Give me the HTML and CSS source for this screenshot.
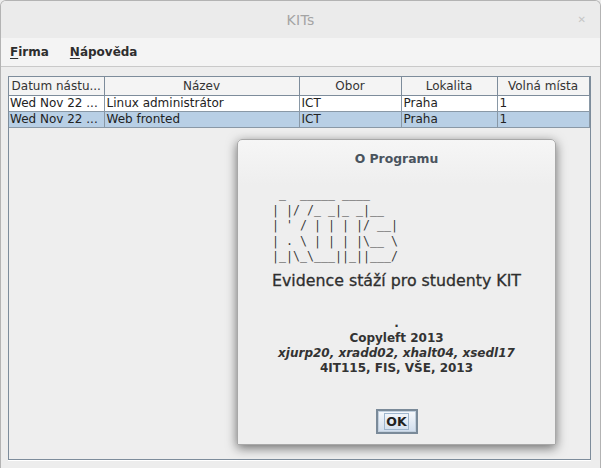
FILE: index.html
```html
<!DOCTYPE html>
<html>
<head>
<meta charset="utf-8">
<title>KITs</title>
<link rel="stylesheet" href="styles.css">
</head>
<body>
<div class="window">
  <div class="titlebar">
    <span class="title">KITs</span>
    <span class="close">✕</span>
  </div>
  <div class="menubar">
    <span class="menu"><u>F</u>irma</span>
    <span class="menu"><u>N</u>ápověda</span>
  </div>
  <div class="content">
    <div class="scroll">
      <table class="grid">
        <colgroup>
          <col class="c1"><col class="c2"><col class="c3"><col class="c4"><col class="c5">
        </colgroup>
        <thead>
          <tr><th>Datum nástu...</th><th>Název</th><th>Obor</th><th>Lokalita</th><th>Volná místa</th></tr>
        </thead>
        <tbody>
          <tr><td>Wed Nov 22 ...</td><td>Linux administrátor</td><td>ICT</td><td>Praha</td><td>1</td></tr>
          <tr class="selected"><td>Wed Nov 22 ...</td><td>Web fronted</td><td>ICT</td><td>Praha</td><td>1</td></tr>
        </tbody>
      </table>
    </div>
  </div>
  <div class="dialog">
    <div class="dialog-title">O Programu</div>
    <div class="about">
<pre class="art"> _  _____ ____
| |/ /_ _|_ _|__
| ' / | | | |/ __|
| . \ | | | |\__ \
|_|\_\___||_||___/</pre>
      <div class="headline">Evidence stáží pro studenty KIT</div>
    </div>
    <div class="info">
      <div>.</div>
      <div>Copyleft 2013</div>
      <div class="authors">xjurp20, xradd02, xhalt04, xsedl17</div>
      <div>4IT115, FIS, VŠE, 2013</div>
    </div>
    <div class="ok-button"><span class="focus">OK</span></div>
  </div>
</div>
</body>
</html>
```
FILE: styles.css
```css
html, body {
  margin: 0;
  padding: 0;
  background: #ededed;
}
body {
  width: 601px;
  height: 468px;
  overflow: hidden;
  font-family: "DejaVu Sans", "Liberation Sans", sans-serif;
}
.window {
  position: relative;
  width: 601px;
  height: 468px;
  box-sizing: border-box;
  border: 1px solid #b3b3b3;
  border-bottom: none;
  border-radius: 6px 6px 0 0;
  background: #ededed;
  display: flex;
  flex-direction: column;
  overflow: hidden;
}
.titlebar {
  height: 37px;
  flex: none;
  background: #ebebeb;
  display: grid;
  grid-template-columns: 1fr auto 1fr;
  align-items: center;
}
.title {
  grid-column: 2;
  font-size: 14px;
  color: #a4a4a4;
  letter-spacing: 0.3px;
}
.close {
  grid-column: 3;
  justify-self: end;
  margin-right: 14px;
  font-size: 10px;
  font-weight: bold;
  color: #c6c6c6;
}
.menubar {
  height: 28px;
  flex: none;
  background: #f4f4f4;
  border-bottom: 1px solid #c9c9c9;
  display: flex;
  align-items: center;
  padding-left: 9px;
  gap: 21px;
}
.menu {
  font-size: 12px;
  font-weight: bold;
  color: #2e2e2e;
}
.menu u {
  text-underline-offset: 2px;
}
.content {
  flex: 1;
  padding: 9px 9px 8px 7px;
  display: flex;
}
.scroll {
  flex: 1;
  border: 1px solid #7d8c9b;
  background: #eeeeee;
  box-shadow: 0 1px 0 #ffffff;
}
.grid {
  border-collapse: collapse;
  table-layout: fixed;
  width: 580px;
  font-size: 12px;
  color: #222222;
}
.c1 { width: 95px; }
.c2 { width: 195px; }
.c3 { width: 102px; }
.c4 { width: 96px; }
.c5 { width: 92px; }
.grid th {
  height: 18px;
  padding: 0 1px;
  font-weight: normal;
  color: #333333;
  background: #f4f4f4;
  border: 1px solid #7d8c9b;
  border-top: none;
  white-space: nowrap;
  overflow: hidden;
  text-align: center;
  line-height: 18px;
}
.grid th:first-child { border-left: none; }
.grid td {
  height: 15px;
  padding: 0 2px 0 2px;
  border: 1px solid #8998a6;
  background: #ffffff;
  white-space: nowrap;
  overflow: hidden;
  line-height: 15px;
}
.grid td:first-child { border-left: none; padding-left: 1px; }
.grid tr.selected td { background: #b8cfe5; }

.dialog {
  position: absolute;
  left: 236px;
  top: 138px;
  width: 319px;
  height: 306px;
  box-sizing: border-box;
  border: 1px solid #a8a8a8;
  border-radius: 5px 5px 0 0;
  background: linear-gradient(#f6f6f6, #eeeeee 45px);
  box-shadow: 0 3px 11px rgba(0, 0, 0, 0.55);
  display: flex;
  flex-direction: column;
  align-items: center;
  color: #333333;
}
.dialog-title {
  margin-top: 11px;
  font-size: 12.4px;
  font-weight: bold;
  line-height: 15px;
  color: #4a545e;
}
.about {
  margin-top: 21px;
  display: flex;
  flex-direction: column;
}
.art {
  margin: 0;
  font-family: "DejaVu Sans Mono", "Liberation Mono", monospace;
  font-size: 11.63px;
  line-height: 15.5px;
  color: #3a3a3a;
}
.headline {
  margin-top: 6px;
  font-size: 15.8px;
  line-height: 20px;
  color: #2e2e2e;
  -webkit-text-stroke: 0.3px #2e2e2e;
}
.info {
  margin-top: 25px;
  font-size: 12px;
  font-weight: bold;
  line-height: 15px;
  text-align: center;
  color: #333333;
}
.authors {
  font-style: italic;
}
.ok-button {
  margin-top: 33px;
  width: 42px;
  height: 25px;
  box-sizing: border-box;
  border: 2px solid #7a8a99;
  box-shadow: inset 0 0 0 1px #c2d0de;
  background: linear-gradient(#f7f9fc, #d0dded);
  display: flex;
  align-items: center;
  justify-content: center;
}
.focus {
  border: 1px solid #9fb6cd;
  padding: 0 1px;
  font-size: 12.5px;
  font-weight: bold;
  line-height: 15px;
  color: #222222;
}
```
